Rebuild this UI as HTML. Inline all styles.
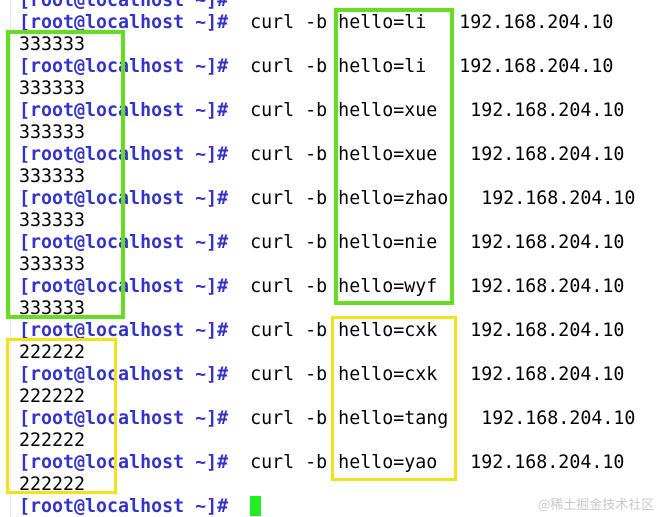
<!DOCTYPE html>
<html><head><meta charset="utf-8"><style>
html,body{margin:0;padding:0;background:#fff;width:667px;height:517px;overflow:hidden;position:relative}
#t{position:absolute;left:19px;top:-10px;font-family:"DejaVu Sans Mono","Liberation Mono",monospace;font-size:18.3px;line-height:22px;white-space:pre;color:#000;font-weight:500}
.p{color:#3333cc;font-weight:bold}
.b{position:absolute;box-sizing:border-box}
.g{border:4px solid #66dd22}
.y{border:3px solid #f5e11a}
.cur{display:inline-block;width:11px;height:20px;background:#22ee22;vertical-align:-4px}
#wm{position:absolute;left:538px;top:494px;font-family:"Noto Sans CJK SC",sans-serif;font-size:13px;color:#c8c8c8}
#ln{position:absolute;left:10px;top:0;width:1px;height:517px;background:#e6e6e6}
</style></head><body>
<div id="ln"></div>
<div id="t"><span class="p">[root@localhost ~]#</span>
<span class="p">[root@localhost ~]#</span>  curl -b hello=li   192.168.204.10
333333
<span class="p">[root@localhost ~]#</span>  curl -b hello=li   192.168.204.10
333333
<span class="p">[root@localhost ~]#</span>  curl -b hello=xue   192.168.204.10
333333
<span class="p">[root@localhost ~]#</span>  curl -b hello=xue   192.168.204.10
333333
<span class="p">[root@localhost ~]#</span>  curl -b hello=zhao   192.168.204.10
333333
<span class="p">[root@localhost ~]#</span>  curl -b hello=nie   192.168.204.10
333333
<span class="p">[root@localhost ~]#</span>  curl -b hello=wyf   192.168.204.10
333333
<span class="p">[root@localhost ~]#</span>  curl -b hello=cxk   192.168.204.10
222222
<span class="p">[root@localhost ~]#</span>  curl -b hello=cxk   192.168.204.10
222222
<span class="p">[root@localhost ~]#</span>  curl -b hello=tang   192.168.204.10
222222
<span class="p">[root@localhost ~]#</span>  curl -b hello=yao   192.168.204.10
222222
<span class="p">[root@localhost ~]#</span>  <span class="cur"></span></div>
<div class="b g" style="left:6px;top:30px;width:119px;height:289px"></div>
<div class="b g" style="left:334px;top:8px;width:120px;height:297px"></div>
<div class="b y" style="left:6px;top:338px;width:111px;height:156px"></div>
<div class="b y" style="left:331px;top:316px;width:126px;height:165px"></div>
<div id="wm">@稀土掘金技术社区</div>
</body></html>
